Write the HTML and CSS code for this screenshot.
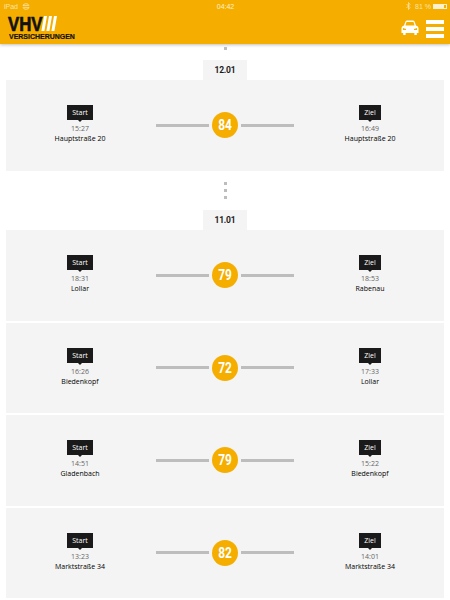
FILE: index.html
```html
<!DOCTYPE html>
<html lang="de">
<head>
    <meta charset="UTF-8">
    <meta name="viewport" content="width=device-width, initial-scale=1.0">
    <title>VHV Fahrten</title>
    <link rel="stylesheet" href="styles.css">
</head>
<body>
    <header class="header">
        <div class="status-bar">
            <div class="status-left">
                <span>iPad</span>
                <svg class="sync" width="8" height="7" viewBox="0 0 8 7"><path d="M1 3 Q1 0.7 4 0.7 Q6.5 0.7 7 2.5 M1 2.6 H6.8 M7 4 Q7 6.3 4 6.3 Q1.5 6.3 1 4.5 M1.2 4.4 H7" fill="none" stroke="#fbe3a8" stroke-width="0.8"/></svg>
            </div>
            <span class="status-time">04:42</span>
            <div class="status-right">
                <svg width="5" height="8" viewBox="0 0 5 8"><path d="M0.5 2 L4 5.5 L2.5 7.5 V0.5 L4 2.5 L0.5 6" fill="none" stroke="#fbe3a8" stroke-width="0.8"/></svg>
                <span>81 %</span>
                <span class="battery"><span class="battery-level"></span></span>
            </div>
        </div>
        <div class="nav-bar">
            <div class="logo">
                <div class="logo-top">
                    <span class="logo-vhv">VHV</span>
                    <svg width="16" height="15" viewBox="0 0 16 15"><path d="M3 0H6L3.4 15H0.4Z M8 0H11L8.4 15H5.4Z M13 0H16L13.4 15H10.4Z" fill="#fff"/></svg>
                </div>
                <span class="logo-sub">VERSICHERUNGEN</span>
            </div>
            <div class="nav-icons">
                <svg width="18" height="16" viewBox="0 0 18 16"><path d="M4.5 1.5 Q5 0.5 6 0.5 H12 Q13 0.5 13.5 1.5 L15 5.5 Q17.5 6 17.5 8 V13 H15.8 V15 H13.4 V13 H4.6 V15 H2.2 V13 H0.5 V8 Q0.5 6 3 5.5 Z M5.5 2 L4.4 5.4 H13.6 L12.5 2 Z M2 8 V10 H5 V9 Z M16 8 L13 9 V10 H16 Z" fill="#fff" fill-rule="evenodd"/></svg>
                <div class="burger"><span></span><span></span><span></span></div>
            </div>
        </div>
    </header>

    <main class="content">
        <div class="dots dots-top"><span></span></div>
        <div class="date-tab">12.01</div>
        <section class="trip">
            <div class="stop">
                <span class="tag">Start</span>
                <span class="time">15:27</span>
                <span class="place">Hauptstraße 20</span>
            </div>
            <div class="score"><span class="line"></span><span class="badge"><span class="num">84</span></span><span class="line"></span></div>
            <div class="stop">
                <span class="tag">Ziel</span>
                <span class="time">16:49</span>
                <span class="place">Hauptstraße 20</span>
            </div>
        </section>

        <div class="dots"><span></span><span></span><span></span></div>
        <div class="date-tab">11.01</div>
        <section class="trip">
            <div class="stop">
                <span class="tag">Start</span>
                <span class="time">18:31</span>
                <span class="place">Lollar</span>
            </div>
            <div class="score"><span class="line"></span><span class="badge"><span class="num">79</span></span><span class="line"></span></div>
            <div class="stop">
                <span class="tag">Ziel</span>
                <span class="time">18:53</span>
                <span class="place">Rabenau</span>
            </div>
        </section>
        <section class="trip">
            <div class="stop">
                <span class="tag">Start</span>
                <span class="time">16:26</span>
                <span class="place">Biedenkopf</span>
            </div>
            <div class="score"><span class="line"></span><span class="badge"><span class="num">72</span></span><span class="line"></span></div>
            <div class="stop">
                <span class="tag">Ziel</span>
                <span class="time">17:33</span>
                <span class="place">Lollar</span>
            </div>
        </section>
        <section class="trip">
            <div class="stop">
                <span class="tag">Start</span>
                <span class="time">14:51</span>
                <span class="place">Gladenbach</span>
            </div>
            <div class="score"><span class="line"></span><span class="badge"><span class="num">79</span></span><span class="line"></span></div>
            <div class="stop">
                <span class="tag">Ziel</span>
                <span class="time">15:22</span>
                <span class="place">Biedenkopf</span>
            </div>
        </section>
        <section class="trip">
            <div class="stop">
                <span class="tag">Start</span>
                <span class="time">13:23</span>
                <span class="place">Marktstraße 34</span>
            </div>
            <div class="score"><span class="line"></span><span class="badge"><span class="num">82</span></span><span class="line"></span></div>
            <div class="stop">
                <span class="tag">Ziel</span>
                <span class="time">14:01</span>
                <span class="place">Marktstraße 34</span>
            </div>
        </section>
    </main>
</body>
</html>
```

FILE: styles.css
```css
html, body {
    margin: 0;
    height: 600px;
    overflow: hidden;
}
body {
    font-family: "Open Sans", sans-serif;
    background-color: #fff;
    color: #1a1a1a;
}
.header {
    height: 44px;
    background-color: #f5ae00;
    box-shadow: 0 1px 3px rgba(0, 0, 0, 0.25);
}
.status-bar {
    height: 12px;
    padding: 0 3px 0 4px;
    display: flex;
    align-items: center;
    justify-content: space-between;
    font-family: "Liberation Sans", sans-serif;
    font-size: 7px;
    color: #fbe3a8;
}
.status-left, .status-right {
    width: 60px;
    display: flex;
    align-items: center;
    gap: 4px;
}
.status-right {
    justify-content: flex-end;
}
.status-time {
    color: #fdf0d0;
}
.battery {
    width: 12px;
    height: 3px;
    border: 1px solid #fdf0d0;
    box-sizing: content-box;
    margin-left: -2px;
    display: block;
}
.battery-level {
    display: block;
    width: 80%;
    height: 100%;
    background-color: #fdf0d0;
}
.nav-bar {
    height: 32px;
    padding: 4px 6px 0 8px;
    box-sizing: border-box;
    display: flex;
    justify-content: space-between;
}
.logo {
    display: flex;
    flex-direction: column;
    line-height: 1;
    font-family: "Liberation Sans", sans-serif;
    font-weight: bold;
    color: #111;
    width: 70px;
}
.logo-top {
    display: flex;
    align-items: flex-start;
    gap: 1px;
    height: 15px;
}
.logo-vhv {
    font-size: 21px;
    line-height: 15px;
    width: 32px;
    -webkit-text-stroke: 0.7px #111;
    transform: scaleX(0.8);
    transform-origin: left;
}
.logo-sub {
    font-size: 7.5px;
    margin-top: 2px;
    margin-left: 1px;
    white-space: nowrap;
    -webkit-text-stroke: 0.2px #111;
    transform: scaleX(0.93);
    transform-origin: left;
}
.nav-icons {
    display: flex;
    align-items: flex-start;
    gap: 7px;
    padding-top: 4px;
}
.burger {
    width: 18px;
    display: flex;
    flex-direction: column;
    gap: 3px;
}
.burger span {
    height: 4px;
    background-color: #fff;
}
.content {
    display: flex;
    flex-direction: column;
}
.dots {
    height: 17px;
    margin: 11.5px 0 11px;
    display: flex;
    flex-direction: column;
    align-items: center;
    justify-content: space-between;
}
.dots span {
    width: 3px;
    height: 3px;
    background-color: #bdbdbd;
}
.dots-top {
    height: 3px;
    margin: 3px 0 10px;
}
.date-tab {
    width: 44px;
    height: 20px;
    align-self: center;
    background-color: #f4f4f4;
    font-family: "Roboto", sans-serif;
    font-size: 8.5px;
    font-weight: bold;
    letter-spacing: -0.2px;
    line-height: 20px;
    text-align: center;
}
.trip {
    height: 90.5px;
    margin: 0 6px 2px;
    background-color: #f4f4f4;
    display: grid;
    grid-template-columns: 148px 1fr 148px;
}
.trip:has(+ .dots) {
    margin-bottom: 0;
}
.stop {
    padding-top: 25px;
    display: flex;
    flex-direction: column;
    align-items: center;
}
.tag {
    position: relative;
    padding: 0 5px;
    height: 15px;
    background-color: #1a1a1a;
    color: #fff;
    font-size: 7px;
    line-height: 15px;
}
.tag::after {
    content: "";
    position: absolute;
    left: 50%;
    bottom: -2px;
    margin-left: -2px;
    border-left: 2px solid transparent;
    border-right: 2px solid transparent;
    border-top: 2px solid #1a1a1a;
}
.time {
    margin-top: 4px;
    font-size: 7px;
    line-height: 10px;
    color: #666;
}
.place {
    font-size: 7px;
    line-height: 10px;
    font-weight: 500;
    color: #000;
}
.score {
    display: flex;
    align-items: center;
    justify-content: center;
    gap: 3px;
}
.line {
    width: 53px;
    height: 3px;
    background-color: #bdbdbd;
}
.badge {
    width: 26px;
    height: 26px;
    border-radius: 50%;
    background-color: #f5ae00;
    color: #fff;
    font-family: "Roboto", sans-serif;
    font-size: 14px;
    font-weight: bold;
    line-height: 26px;
    text-align: center;
}
.num {
    display: inline-block;
    transform: scaleX(0.85);
}
```
